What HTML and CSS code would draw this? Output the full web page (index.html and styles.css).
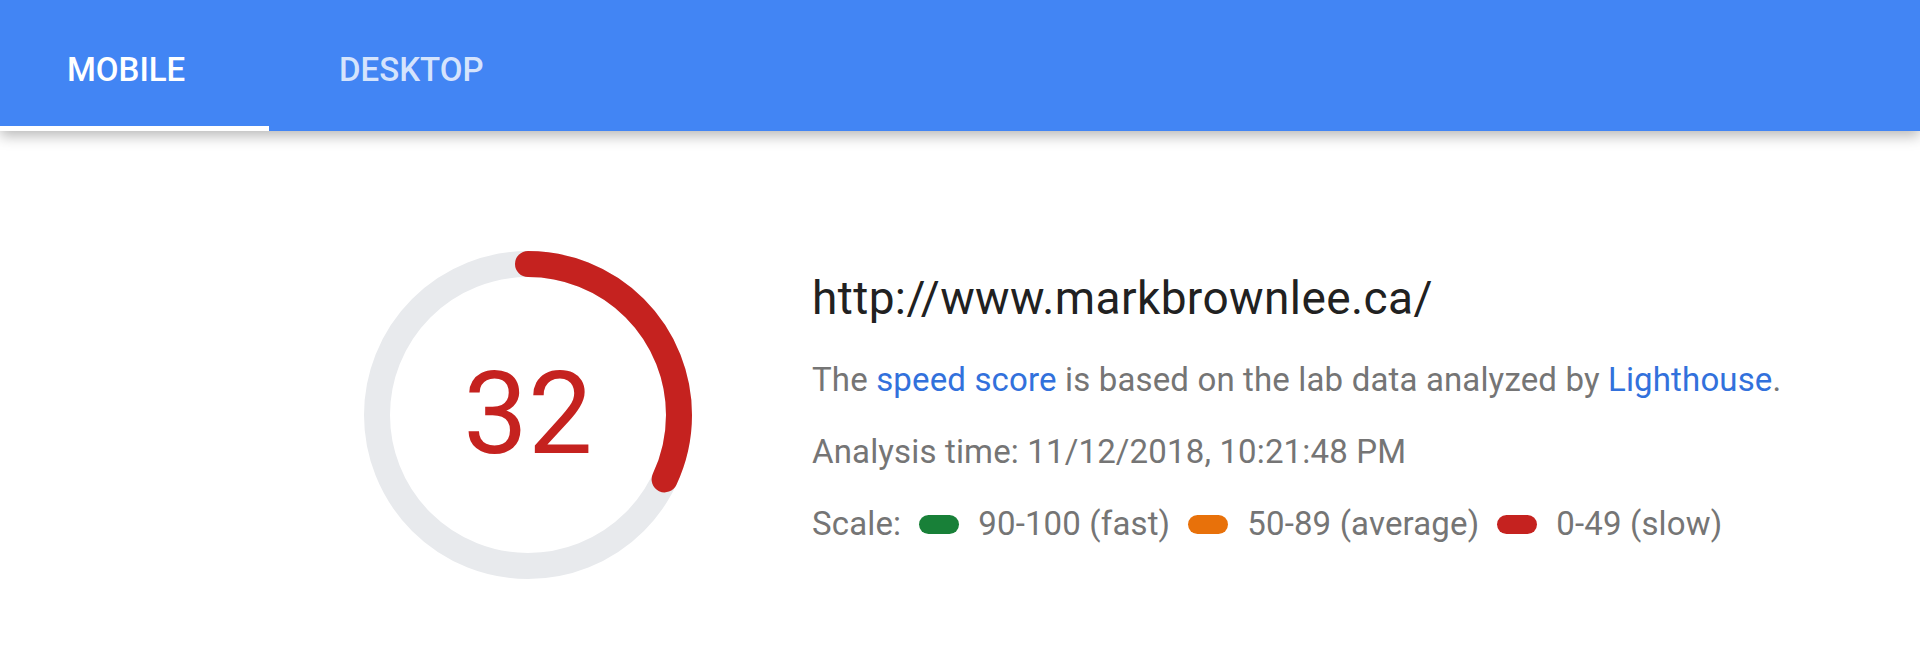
FILE: index.html
```html
<!DOCTYPE html>
<html lang="en">
<head>
<meta charset="utf-8">
<title>PageSpeed Insights</title>
<link rel="stylesheet" href="styles.css">
</head>
<body>
<header class="tabbar">
  <div class="tab tab-active">MOBILE</div>
  <div class="tab">DESKTOP</div>
</header>
<main class="summary">
  <div class="gauge">
    <svg class="gauge-svg" viewBox="0 0 328 328" width="328" height="328">
      <circle class="gauge-track" cx="164" cy="164" r="151"></circle>
      <circle class="gauge-arc" cx="164" cy="164" r="151" transform="rotate(-90 164 164)" stroke-dasharray="303.6 1000"></circle>
    </svg>
    <div class="gauge-score">32</div>
  </div>
  <div class="details">
    <h1 class="url">http://www.markbrownlee.ca/</h1>
    <p class="line">The <a class="link" href="#">speed score</a> is based on the lab data analyzed by <a class="link" href="#">Lighthouse</a>.</p>
    <p class="line">Analysis time: 11/12/2018, 10:21:48 PM</p>
    <div class="line scale">
      <span class="scale-label">Scale:</span>
      <span class="scale-item"><span class="pill pill-fast"></span>90-100 (fast)</span>
      <span class="scale-item"><span class="pill pill-average"></span>50-89 (average)</span>
      <span class="scale-item"><span class="pill pill-slow"></span>0-49 (slow)</span>
    </div>
  </div>
</main>
</body>
</html>
```

FILE: styles.css
```css
html, body {
  margin: 0;
  padding: 0;
  background: #ffffff;
  font-family: Roboto, "Liberation Sans", Arial, sans-serif;
}

.tabbar {
  position: relative;
  z-index: 2;
  display: flex;
  height: 131px;
  background: #4285f4;
  box-shadow: 0 5px 13px rgba(0, 0, 0, 0.28);
}

.tab {
  box-sizing: border-box;
  width: 269px;
  padding: 50px 0 0 67px;
  font-size: 33px;
  line-height: 40px;
  font-weight: 500;
  color: rgba(255, 255, 255, 0.78);
}

.tab + .tab {
  padding-left: 70px;
}

.tab-active {
  color: #ffffff;
  border-bottom: 5px solid #ffffff;
  height: 131px;
}

.summary {
  display: flex;
  align-items: flex-start;
  padding: 120px 0 0 364px;
  gap: 120px;
}

.gauge {
  position: relative;
  width: 328px;
  height: 328px;
  flex: none;
}

.gauge-svg {
  display: block;
}

.gauge-track {
  fill: none;
  stroke: #e8eaed;
  stroke-width: 26;
}

.gauge-arc {
  fill: none;
  stroke: #c5221f;
  stroke-width: 26;
  stroke-linecap: round;
}

.gauge-score {
  position: absolute;
  inset: 0;
  display: flex;
  align-items: center;
  justify-content: center;
  font-size: 115px;
  color: #c5221f;
  padding-bottom: 4px;
  box-sizing: border-box;
}

.details {
  padding-top: 21px;
}

.url {
  margin: 0;
  font-size: 46px;
  line-height: 52px;
  font-weight: 400;
  letter-spacing: 0.4px;
  color: #212121;
}

.line {
  margin: 0;
  font-size: 33px;
  line-height: 72px;
  letter-spacing: 0.15px;
  color: #757575;
}

.url + .line {
  margin-top: 20px;
}

.link {
  color: #3271dc;
  text-decoration: none;
}

.scale {
  display: flex;
  align-items: center;
  gap: 18px;
}

.scale-item {
  display: inline-flex;
  align-items: center;
  gap: 19px;
}

.pill {
  display: inline-block;
  width: 40px;
  height: 19px;
  border-radius: 10px;
}

.pill-fast { background: #188038; }
.pill-average { background: #e8710a; }
.pill-slow { background: #c5221f; }
```
